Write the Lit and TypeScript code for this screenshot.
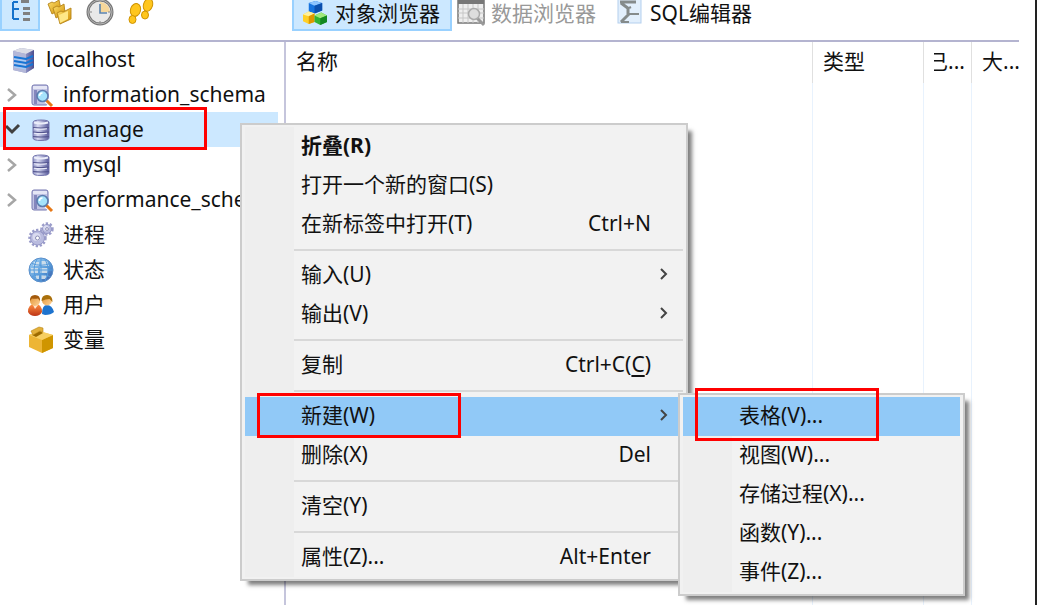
import { LitElement, html, css, svg, nothing } from "lit";
import { customElement } from "lit/decorators.js";
import { classMap } from "lit/directives/class-map.js";

const defs = svg`<defs>
  <linearGradient id="steel" x1="0" x2="1"><stop offset="0" stop-color="#8f93c4"/><stop offset=".3" stop-color="#d9dbf2"/><stop offset="1" stop-color="#55579a"/></linearGradient>
  <linearGradient id="gold" x1="0" x2="1" y2="1"><stop offset="0" stop-color="#ffe271"/><stop offset="1" stop-color="#d08d00"/></linearGradient>
  <linearGradient id="azure" x1="0" x2="1" y2="1"><stop offset="0" stop-color="#a8d6f8"/><stop offset=".6" stop-color="#5598d8"/><stop offset="1" stop-color="#34509c"/></linearGradient>
  <linearGradient id="brick" y2="1" x2="0"><stop offset="0" stop-color="#ff9040"/><stop offset="1" stop-color="#bd3416"/></linearGradient>
  <linearGradient id="skin" x1="0" x2="1" y2="1"><stop offset="0" stop-color="#e09030"/><stop offset="1" stop-color="#ffd49a"/></linearGradient>
  <linearGradient id="side" x1="0" x2="1"><stop offset="0" stop-color="#8b8fc2"/><stop offset="1" stop-color="#4c4e8e"/></linearGradient>
</defs>`;

const cylinder = svg`
  <path d="M5 5.500Q5 3 13 3t8 2.500V21q0 2.500-8 2.500T5 21Z" fill="url(#steel)" stroke="#7476ae"/>
  <path d="M6 5.500q7 2 14 0" fill="none" stroke="#eceefa" stroke-width="2"/>
  <path d="M5 10.500q8 1 16 0M5 15q8 1 16 0M5 19.500q8 1 16 0" fill="none" stroke="#54568f" stroke-width="1.200"/>
  <path d="M6 11.700q7 1 13 0M6 16.200q7 1 13 0" fill="none" stroke="#e8e9f8" stroke-width="1.100"/>`;

const gear = (x: number, y: number, r: number) => svg`
  <circle cx=${x} cy=${y} r=${r} fill="none" stroke="#9a9cca" stroke-width="2.400" stroke-dasharray="2.300 1.700"/>
  <circle cx=${x} cy=${y} r=${r - 1} fill="#b9bbdf" stroke="#9496c6"/>
  <circle cx=${x - 1} cy=${y - 1} r=${r / 2} fill="#dadbf0"/>
  <circle cx=${x} cy=${y} r=${r / 4} fill="#fff" stroke="#8a8cb4"/>`;

const icons: Record<string, unknown> = {
  server: svg`
    <path d="M2 4 10 1l13 2v18l-8 5L2 23Z" fill="#9aa0cc"/>
    <path d="M2 4 10 1l13 2-8 4Z" fill="#dcdde6"/>
    <path d="M2 4l13 3v19L2 23Z" fill="#b3b7d8"/>
    <path d="M15 7 23 3v18l-8 5Z" fill="url(#side)"/>
    <path d="m3 10 12 2 7-3M3 14l12 2 7-3M3 18l12 2 7-3" fill="none" stroke="#1675d6" stroke-width="2"/>
    <path d="m3 12 12 2M3 16l12 2M3 20l12 2" fill="none" stroke="#9fd0ff"/>`,
  database: cylinder,
  schema: svg`
    <rect x="4" y="3" width="16" height="20" rx="2" fill="#c2c4e4" stroke="#7577b0"/>
    <path d="M5 4h14v3H5Z" fill="#e5e6f5"/><path d="M6 8v14h3V8Z" fill="#8587bd"/>
    <path d="m18 18 6 6" stroke="#fff" stroke-width="5"/><path d="m18 18 6 6" stroke="#e67817" stroke-width="3"/>
    <circle cx="14.500" cy="14" r="5.500" fill="#a5e3fb" stroke="#5c7cae" stroke-width="1.600"/>
    <path d="M11.500 14q0-3 3-3" fill="none" stroke="#fff" stroke-width="1.500"/>`,
  process: svg`${gear(19, 7, 5.5)}${gear(9.5, 16, 8)}`,
  status: svg`
    <circle cx="13" cy="13" r="12" fill="url(#azure)" stroke="#5b8fca"/>
    <path d="M6 5h5v4H5ZM13 4h6l2 5h-8ZM3 11h7v5H3ZM12 11h8v5h-8ZM6 18h5v4H8ZM13 18h7l-3 4h-4Z" fill="#dbe5ec" opacity=".85"/>
    <path d="M13 1v24M1 13h24M4 6.500q9 3.500 18 0M4 19.500q9-3.500 18 0M9 2Q3 13 9 24M17 2q6 11 0 22" fill="none" stroke="#559bdc"/>`,
  users: svg`
    <path d="M14 22q0-9 5-9t7 7q-3 3-9 3Z" fill="#1d73ce"/>
    <circle cx="19" cy="8.500" r="5" fill="url(#skin)"/><path d="M13.500 9q0-6 5.500-6t5.500 7l-3-3q-4 0-8 2Z" fill="#a9700c"/>
    <path d="M0 20q0-8 7-8t7 8q-2 4-7 4t-7-4Z" fill="url(#brick)"/><path d="m5 13 2 4 3-4Z" fill="#ffe6ce"/>
    <circle cx="7" cy="9" r="5" fill="url(#skin)"/><path d="M2 9q-.5-6 5-6t5 6L10 6.500Q6 7 4 6.500Z" fill="#a35a0c"/>`,
  variable: svg`
    <path d="M1 8 10 4l15 4v13l-11 5-13-6Z" fill="#edb535"/>
    <path d="M14 13 25 8v13l-11 5Z" fill="#cf9500"/>
    <path d="M1 8 12 4l13 4-11 5Z" fill="#f7cf62"/>
    <path d="M4 8 12 4l3 2-7 4Z" fill="#9c6a00"/>
    <path d="m3 4 8-4 4 1v4l-3-1-7 4Z" fill="#e3b03a" stroke="#b98512" stroke-width=".6"/>`,
  outline: svg`
    <path d="M5 2v17M5 2h5M5 9h6M5 19h6" fill="none" stroke="#1673cc" stroke-width="2"/>
    <path d="M13 0h8v3h-8ZM15 7h7v3h-7ZM15 12h7v3h-7ZM15 18h7v3h-7Z" fill="#808080"/>`,
  folders: svg`
    <g fill="url(#gold)" stroke="#b5851a" stroke-width=".9">
      <path d="m2 4 4-2 2 1 5-3 2 9-9 5Z"/><path d="m7 8 4-2 2 1 5-3 1 9-9 5Z"/><path d="m11 13 4-2 2 1 8-4v11l-11 5Z"/>
    </g><path d="m13 15 9-4v8l-8 4Z" fill="#ffe887"/>`,
  clock: svg`
    <circle cx="14" cy="12" r="12" fill="#e9e9e9" stroke="#777" stroke-width="3"/>
    <circle cx="14" cy="12" r="12" fill="none" stroke="#b5b5b5"/>
    <path d="M14 12V2a10 10 0 0 1 10 10Z" fill="#f6d79b"/>
    <path d="M14 4v9h7" fill="none" stroke="#5c84ad" stroke-width="1.600"/>
    <path d="M14 21v2M4 12h2M22 12h2" stroke="#888"/>`,
  steps: svg`
    <g fill="#ffc61d" stroke="#cf9300">
      <ellipse cx="9.500" cy="10" rx="5" ry="6.500" transform="rotate(18 9.500 10)"/><ellipse cx="6.500" cy="19.500" rx="3.500" ry="4"/>
      <ellipse cx="22" cy="5" rx="4.500" ry="6.500" transform="rotate(18 22 5)"/><ellipse cx="19" cy="15" rx="3.500" ry="4"/>
    </g>`,
  objects: svg`
    <g transform="translate(2 1) scale(.96)">
    <path d="m6 2 7-2 7 2v8l-8 3-6-2Z" fill="#1673de"/><path d="m6 2 7-2 7 2-8 3Z" fill="#8cc4ff"/><path d="M12 5 20 2v8l-8 3Z" fill="#0b4fad"/>
    <path d="m0 14 6-3 6 2v9l-6 2-6-3Z" fill="#ffd028"/><path d="m0 14 6-3 6 2-6 3Z" fill="#fff1a0"/><path d="m6 16 6-3v9l-6 2Z" fill="#dd9700"/>
    <path d="m12 15 7-3 6 3v7l-7 3-6-3Z" fill="#31b334"/><path d="m12 15 7-3 6 3-7 3Z" fill="#a0e87c"/><path d="m18 18 7-3v7l-7 3Z" fill="#138821"/>
    </g>`,
  data: svg`
    <rect x="1" y="0" width="26" height="23" fill="#eee" stroke="#777" stroke-width="1.500"/>
    <path d="M1 0h26v4H1Z" fill="#777"/>
    <path d="M1 9h26M1 13h26M1 18h26M6 4v19M11 4v19M16 4v19M21 4v19" stroke="#c6c6c6"/>
    <path d="m20 18 7 7" stroke="#999" stroke-width="3"/><circle cx="17" cy="14" r="5.500" fill="#ddd" stroke="#aaa" stroke-width="1.500"/>`,
  sql: svg`
    <rect x="2" y="-3" width="23" height="26" fill="#e2effc" stroke="#b4cfee"/>
    <path d="M4 2h16M5 3l8 6M12 9v5M13 14l-8 8" fill="none" stroke="#858b8b" stroke-width="3"/>
    <path d="M13 8l2-1M12 14h11M5 22h8" fill="none" stroke="#858b8b" stroke-width="2"/>`,
};

const icon = (name: string) =>
  html`<svg class="icon" viewBox="0 0 28 26" width="28" height="26" aria-hidden="true">${defs}${icons[name]}</svg>`;

interface Node { label: string; icon: string; fold?: "open" | "closed"; root?: boolean }
const nodes: Node[] = [
  { label: "localhost", icon: "server", root: true },
  { label: "information_schema", icon: "schema", fold: "closed" },
  { label: "manage", icon: "database", fold: "open" },
  { label: "mysql", icon: "database", fold: "closed" },
  { label: "performance_schema", icon: "schema", fold: "closed" },
  { label: "进程", icon: "process" },
  { label: "状态", icon: "status" },
  { label: "用户", icon: "users" },
  { label: "变量", icon: "variable" },
];

interface Item { label: string; keys?: unknown; strong?: boolean; more?: boolean; sub?: Item[]; marked?: boolean }
const submenu: Item[] = [
  { label: "表格(V)...", marked: true },
  { label: "视图(W)..." },
  { label: "存储过程(X)..." },
  { label: "函数(Y)..." },
  { label: "事件(Z)..." },
];
const menu: (Item | null)[] = [
  { label: "折叠(R)", strong: true },
  { label: "打开一个新的窗口(S)" },
  { label: "在新标签中打开(T)", keys: "Ctrl+N" },
  null,
  { label: "输入(U)", more: true },
  { label: "输出(V)", more: true },
  null,
  { label: "复制", keys: html`Ctrl+C(<u>C</u>)` },
  null,
  { label: "新建(W)", more: true, marked: true, sub: submenu },
  { label: "删除(X)", keys: "Del" },
  null,
  { label: "清空(Y)" },
  null,
  { label: "属性(Z)...", keys: "Alt+Enter" },
];

@customElement("context-menu")
class ContextMenu extends LitElement {
  static properties = { items: { attribute: false } };
  declare items: (Item | null)[];

  static styles = css`
    :host {
      display: block;
      box-sizing: border-box;
      border: 2px solid #ccc;
      padding: 2px 3px;
      background: #f1f1f1;
      box-shadow: 6px 6px 4px -2px rgba(0, 0, 0, 0.5);
    }
    ul { list-style: none; margin: 0; padding: 0; background: linear-gradient(90deg, #eee 49px, #f2f2f2 49px); }
    li { position: relative; }
    .rule { height: 12px; display: flex; align-items: center; padding-left: 49px; }
    .rule::before { content: ""; flex: 1; height: 2px; background: #d8d8d8; }
    .item {
      display: flex;
      align-items: center;
      width: 100%;
      height: 39px;
      box-sizing: border-box;
      margin: 0;
      padding: 0 13px 3px 56px;
      border: 0;
      background: none;
      color: #111;
      font: inherit;
      text-align: left;
      white-space: nowrap;
    }
    .label { flex: 1; }
    .keys { margin-right: 19px; }
    .strong { font-weight: 700; }
    .marked { background: #91c9f7; }
    .marked::after {
      content: "";
      position: absolute;
      box-sizing: border-box;
      inset: -4px auto -2px 12px;
      width: 204px;
      border: 3px solid #f00;
    }
    .leaf.marked::after { inset: -9px auto -5px 12px; width: 184px; }
    .nested { position: absolute; z-index: 1; top: -4px; left: 433px; width: 287px; }
    u { text-underline-offset: 3px; }
  `;

  render() {
    return html`<ul role="menu">
      ${this.items.map((it) =>
        it
          ? html`<li role="none">
              <button role="menuitem" class=${classMap({ item: true, strong: !!it.strong, marked: !!it.marked, leaf: !it.more })}>
                <span class="label">${it.label}</span>
                ${it.keys ? html`<span class="keys">${it.keys}</span>` : nothing}
                ${it.more
                  ? html`<svg width="12" height="16" viewBox="0 0 12 16" aria-hidden="true"><path d="m3 3 5 5-5 5" fill="none" stroke="#444" stroke-width="2" /></svg>`
                  : nothing}
              </button>
              ${it.sub ? html`<context-menu class="nested" .items=${it.sub}></context-menu>` : nothing}
            </li>`
          : html`<li class="rule" role="separator"></li>`
      )}
    </ul>`;
  }
}

@customElement("app-root")
class AppRoot extends LitElement {
  static styles = css`
    :host {
      position: relative;
      display: flex;
      flex-direction: column;
      box-sizing: border-box;
      height: 100vh;
      overflow: hidden;
      padding-right: 16px;
      border-right: 2px solid #222;
      background: #fff;
      color: #111;
      font: 21px/30px "Noto Sans", "Noto Sans CJK SC", sans-serif;
    }
    button { margin: 0; border: 0; background: none; color: inherit; font: inherit; }
    .icon { flex: none; overflow: visible; }
    .bar { display: flex; height: 40px; align-items: flex-start; border-bottom: 2px solid #b4b4d0; }
    .tools { display: flex; width: 292px; }
    .tool { display: flex; box-sizing: border-box; height: 31px; width: 40px; padding: 0 6px; }
    .tab { display: flex; gap: 6px; box-sizing: border-box; height: 31px; padding: 0 10px 0 7px; white-space: nowrap; line-height: 26px; }
    .active { background: #cce8ff; border: solid #99d1ff; border-width: 0 2px 2px; }
    .tool.active { padding: 0 6px; }
    .tab:disabled { color: #999; padding: 0 13px 0 5px; }
    .body { flex: 1; display: flex; min-height: 0; }
    .tree { flex: none; box-sizing: border-box; width: 286px; margin: 0; padding: 0 6px 0 0; list-style: none; border-right: 2px solid #c5c5dc; }
    .node { position: relative; display: flex; align-items: center; box-sizing: border-box; width: 100%; height: 35px; padding: 0; white-space: nowrap; text-align: left; }
    .label { padding-bottom: 2px; }
    .fold { flex: none; width: 28px; height: 20px; }
    .root { padding-left: 11px; }
    .node .icon { margin-right: 7px; }
    .selected { background: #cce8ff; }
    .selected::after { content: ""; position: absolute; box-sizing: border-box; inset: -5px auto -3px 3px; width: 204px; border: 3px solid #f00; }
    .list { flex: 1; display: grid; min-width: 0; }
    table { width: 100%; height: 100%; table-layout: fixed; border-collapse: separate; border-spacing: 0; }
    th { height: 41px; box-sizing: border-box; padding: 0 0 3px 10px; text-align: left; font-weight: 400; overflow: hidden; white-space: nowrap; border-right: 1px solid #e0e0e0; }
    td { padding: 0; border-right: 1px solid #e8f2fd; }
    th:last-child, td:last-child { border-right: 0; }
    .type { width: 111px; }
    .narrow { width: 48px; }
    .last { width: 47px; }
    .cut { display: inline-flex; justify-content: flex-end; width: 14px; overflow: hidden; vertical-align: bottom; }
    .menu { position: absolute; left: 240px; top: 123px; width: 448px; }
  `;

  render() {
    return html`
      <header class="bar">
        <div class="tools">
          <button class="tool active" aria-label="对象树">${icon("outline")}</button>
          <button class="tool" aria-label="书签">${icon("folders")}</button>
          <button class="tool" aria-label="历史">${icon("clock")}</button>
          <button class="tool" aria-label="日志">${icon("steps")}</button>
        </div>
        <button class="tab active">${icon("objects")}<span>对象浏览器</span></button>
        <button class="tab" disabled>${icon("data")}<span>数据浏览器</span></button>
        <button class="tab">${icon("sql")}<span>SQL编辑器</span></button>
      </header>
      <main class="body">
        <ul class="tree" role="tree">
          ${nodes.map(
            (n) => html`<li role="none">
              <button role="treeitem" class=${classMap({ node: true, root: !!n.root, selected: n.fold === "open" })}>
                ${n.root
                  ? nothing
                  : html`<svg class="fold" viewBox="0 0 28 20" aria-hidden="true">
                      ${n.fold === "closed" ? svg`<path d="m8 4 7 6-7 6" fill="none" stroke="#a6a6a6" stroke-width="2.500"/>` : nothing}
                      ${n.fold === "open" ? svg`<path d="m6 6 6 6 7-7" fill="none" stroke="#404040" stroke-width="3"/>` : nothing}
                    </svg>`}
                ${icon(n.icon)}<span class="label">${n.label}</span>
              </button>
            </li>`
          )}
        </ul>
        <div class="list">
          <table>
            <colgroup><col /><col class="type" /><col class="narrow" /><col class="last" /></colgroup>
            <thead><tr><th>名称</th><th>类型</th><th><span class="cut">已</span>...</th><th>大...</th></tr></thead>
            <tbody><tr><td></td><td></td><td></td><td></td></tr></tbody>
          </table>
        </div>
      </main>
      <context-menu class="menu" .items=${menu}></context-menu>
    `;
  }
}
